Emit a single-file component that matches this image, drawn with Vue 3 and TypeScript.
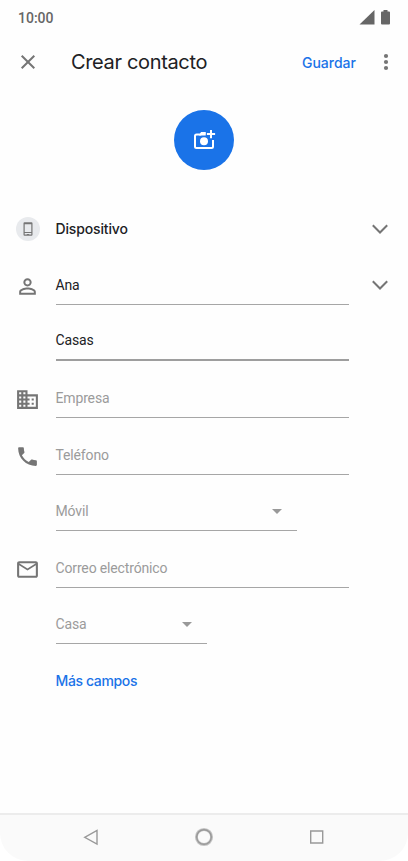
<script setup lang="ts">
interface Field {
  name: string
  text: string
  kind: 'input' | 'select'
  filled?: boolean
  focused?: boolean
  size?: 'medium' | 'small'
  icon?: 'person' | 'business' | 'phone' | 'mail'
  expandable?: boolean
}

const fields: Field[] = [
  { name: 'ana', text: 'Ana', kind: 'input', filled: true, icon: 'person', expandable: true },
  { name: 'casas', text: 'Casas', kind: 'input', filled: true, focused: true },
  { name: 'empresa', text: 'Empresa', kind: 'input', icon: 'business' },
  { name: 'telefono', text: 'Teléfono', kind: 'input', icon: 'phone' },
  { name: 'movil', text: 'Móvil', kind: 'select', size: 'medium' },
  { name: 'correo', text: 'Correo electrónico', kind: 'input', icon: 'mail' },
  { name: 'casa', text: 'Casa', kind: 'select', size: 'small' },
]

const icons: Record<string, string> = {
  person:
    'M12 5.9a2.1 2.1 0 1 1 0 4.2 2.1 2.1 0 0 1 0-4.2m0 9c2.97 0 6.1 1.46 6.1 2.1v1.1H5.9V17c0-.64 3.13-2.1 6.1-2.1M12 4C9.79 4 8 5.79 8 8s1.79 4 4 4 4-1.79 4-4-1.79-4-4-4zm0 9c-2.67 0-8 1.34-8 4v3h16v-3c0-2.66-5.33-4-8-4z',
  business:
    'M12 7V3H2v18h20V7H12zM6 19H4v-2h2v2zm0-4H4v-2h2v2zm0-4H4V9h2v2zm0-4H4V5h2v2zm4 12H8v-2h2v2zm0-4H8v-2h2v2zm0-4H8V9h2v2zm0-4H8V5h2v2zm10 12h-8v-2h2v-2h-2v-2h2v-2h-2V9h8v10zm-2-8h-2v2h2v-2zm0 4h-2v2h2v-2z',
  phone:
    'M6.62 10.79c1.44 2.83 3.76 5.14 6.59 6.59l2.2-2.2c.27-.27.67-.36 1.02-.24 1.12.37 2.33.57 3.57.57.55 0 1 .45 1 1V20c0 .55-.45 1-1 1-9.39 0-17-7.61-17-17 0-.55.45-1 1-1h3.5c.55 0 1 .45 1 1 0 1.25.2 2.45.57 3.57.11.35.03.74-.25 1.02l-2.2 2.2z',
  mail:
    'M22 6c0-1.1-.9-2-2-2H4c-1.1 0-2 .9-2 2v12c0 1.1.9 2 2 2h16c1.1 0 2-.9 2-2V6zm-2 0l-8 5-8-5h16zm0 12H4V8l8 5 8-5v10z',
}
</script>

<template>
  <div class="screen">
    <div class="status">
      <span class="clock">10:00</span>
      <svg class="signal" width="17" height="15" viewBox="0 0 17 15"><path d="M.5 14.5 15.5 0v14.500z" /></svg>
      <svg class="battery" width="9" height="15" viewBox="0 0 9 15"><path d="M2.500 0h4v1.500H8q1 0 1 1v11q0 1-1 1H1q-1 0-1-1v-11q0-1 1-1h1.500z" /></svg>
    </div>

    <header class="bar">
      <svg class="close" width="16" height="16" viewBox="0 0 16 16"><path d="m1.700 1.700 12.600 12.600M14.300 1.700 1.700 14.300" /></svg>
      <h1>Crear contacto</h1>
      <button class="save">Guardar</button>
      <svg class="more" width="6" height="18" viewBox="0 0 6 18">
        <circle cx="3" cy="3" r="2.1" /><circle cx="3" cy="9" r="2.1" /><circle cx="3" cy="15" r="2.1" />
      </svg>
    </header>

    <div class="photo">
      <svg width="24" height="24" viewBox="0 0 24 24">
        <path class="frame" d="M13.500 5.500H10L8.600 6.500H4.500q-1.500 0-1.500 1.500v10.600Q3 20.100 4.500 20.100h15q1.500 0 1.500-1.500V12" />
        <path class="solid" d="M9 4h4.700v3.500H7z" />
        <circle class="solid" cx="12" cy="13.200" r="4" />
        <path class="frame" d="M19 2v8.200M14.900 6.100h8.200" />
      </svg>
    </div>

    <div class="account">
      <span class="badge">
        <svg width="10" height="14" viewBox="0 0 10 14">
          <path fill-rule="evenodd" d="M1.500.3h7q1 0 1 1v11.400q0 1-1 1h-7q-1 0-1-1V1.300q0-1 1-1zM1.700 2.200v7.800h6.600V2.200zM1.700 11v1.500h2.100v-.6h2.400v.6h2.100V11z" />
        </svg>
      </span>
      <span class="account-name">Dispositivo</span>
      <svg class="chevron" width="18" height="12" viewBox="0 0 18 12"><path d="m1.800 2.300 7.200 7.200 7.200-7.200" /></svg>
    </div>

    <div v-for="f in fields" :key="f.name" class="row" :class="f.name">
      <div class="lead">
        <svg v-if="f.icon" width="25" height="25" viewBox="0 0 24 24"><path :d="icons[f.icon]" /></svg>
      </div>
      <div class="field" :class="[f.kind, f.size, { filled: f.filled, focused: f.focused }]">
        <span>{{ f.text }}</span>
        <svg v-if="f.kind === 'select'" class="caret" width="10" height="5" viewBox="0 0 10 5"><path d="M0 0h10L5 5z" /></svg>
      </div>
      <svg v-if="f.expandable" class="chevron" width="18" height="12" viewBox="0 0 18 12"><path d="m1.800 2.300 7.200 7.200 7.200-7.200" /></svg>
    </div>

    <button class="more-fields">Más campos</button>

    <nav class="nav">
      <svg width="20" height="20" viewBox="0 0 20 20"><path d="M3.700 10.300 16 3.500v13.600z" /></svg>
      <svg width="20" height="20" viewBox="0 0 20 20"><circle class="halo" cx="10" cy="10" r="7.600" /><circle cx="10" cy="10" r="7.300" /></svg>
      <svg width="20" height="20" viewBox="0 0 20 20"><path d="M3.700 4h12v12h-12z" /></svg>
    </nav>
  </div>
</template>

<style>
body {
  margin: 0;
  background: #fff;
}
</style>

<style scoped>
.screen {
  display: flex;
  flex-direction: column;
  box-sizing: border-box;
  width: 408px;
  height: 861px;
  overflow: hidden;
  background: #fefefe;
  border-radius: 0 0 28px 28px;
  font-family: Roboto, 'Liberation Sans', sans-serif;
  color: #202124;
}
svg {
  display: block;
  flex: none;
  fill: #757575;
}
button {
  padding: 0;
  border: 0;
  background: none;
  color: #1a73e8;
  font-family: Inter, Roboto, sans-serif;
  font-weight: 500;
}
.status {
  display: flex;
  align-items: center;
  height: 35px;
  padding: 0 18.5px 0 18px;
}
.clock {
  flex: 1;
  padding-top: 1px;
  color: #666;
  font-size: 14px;
  font-weight: 500;
  line-height: 34px;
}
.status svg {
  fill: #666;
}
.battery {
  margin-left: 5px;
}
.bar {
  display: flex;
  align-items: center;
  box-sizing: border-box;
  height: 55px;
  padding: 0 19px 1px 19.5px;
}
.close {
  fill: none;
  stroke: #757575;
  stroke-width: 2;
}
h1 {
  flex: 1;
  margin: 0 0 0 35.5px;
  font-family: Inter, Roboto, sans-serif;
  font-size: 20px;
  font-weight: 400;
  line-height: 28px;
  letter-spacing: -0.35px;
}
.save {
  font-size: 14px;
}
.more {
  margin-left: 27px;
}
.photo {
  display: flex;
  align-items: center;
  justify-content: center;
  align-self: center;
  width: 60px;
  height: 60px;
  margin-top: 20px;
  border-radius: 50%;
  background: #1a73e8;
}
.frame {
  fill: none;
  stroke: #fff;
  stroke-width: 2;
}
.solid {
  fill: #fff;
}
.account {
  display: flex;
  align-items: center;
  height: 56px;
  margin-top: 31px;
  padding: 0 19px 0 16px;
}
.badge {
  display: flex;
  align-items: center;
  justify-content: center;
  width: 24px;
  height: 24px;
  border-radius: 50%;
  background: #e8eaed;
}
.account-name {
  flex: 1;
  margin-left: 15.5px;
  padding-bottom: 1px;
  font-family: Inter, Roboto, sans-serif;
  font-size: 14px;
  font-weight: 500;
  letter-spacing: -0.15px;
}
.chevron {
  fill: none;
  stroke: #757575;
  stroke-width: 2;
}
.row {
  display: flex;
  align-items: flex-end;
  box-sizing: border-box;
  height: 57px;
  padding-right: 19px;
}
.row.ana {
  height: 48px;
}
.row.casas,
.row.movil,
.row.casa {
  height: 56px;
}
.lead {
  width: 55.5px;
  padding-bottom: 6px;
}
.lead svg {
  margin-left: 15px;
}
.field {
  display: flex;
  align-items: center;
  box-sizing: border-box;
  width: 293px;
  height: 39px;
  border-bottom: 1px solid #a6a6a6;
  color: #9b9b9b;
  font-size: 14px;
  line-height: 16px;
  letter-spacing: -0.15px;
}
.field.filled {
  color: #202124;
}
.field.focused {
  height: 40px;
  border-bottom: 2px solid #9e9e9e;
}
.field.select {
  justify-content: space-between;
}
.field.medium {
  width: 241.5px;
}
.field.small {
  width: 151px;
}
.caret {
  margin-right: 15px;
  fill: #999;
}
.row .chevron {
  margin: 0 0 14px auto;
}
.more-fields {
  align-self: flex-start;
  margin: 27px 0 0 55.5px;
  font-size: 14px;
  line-height: 20px;
  letter-spacing: -0.37px;
}
.nav {
  display: flex;
  align-items: center;
  justify-content: center;
  gap: 93px;
  box-sizing: border-box;
  height: 48px;
  margin-top: auto;
  padding-bottom: 2px;
  border-top: 2px solid #ececec;
  background: #fafafa;
}
.nav svg {
  fill: none;
  stroke: #999;
  stroke-width: 1.4;
}
.nav .halo {
  stroke: #c4c4c4;
  stroke-width: 3;
}
</style>
